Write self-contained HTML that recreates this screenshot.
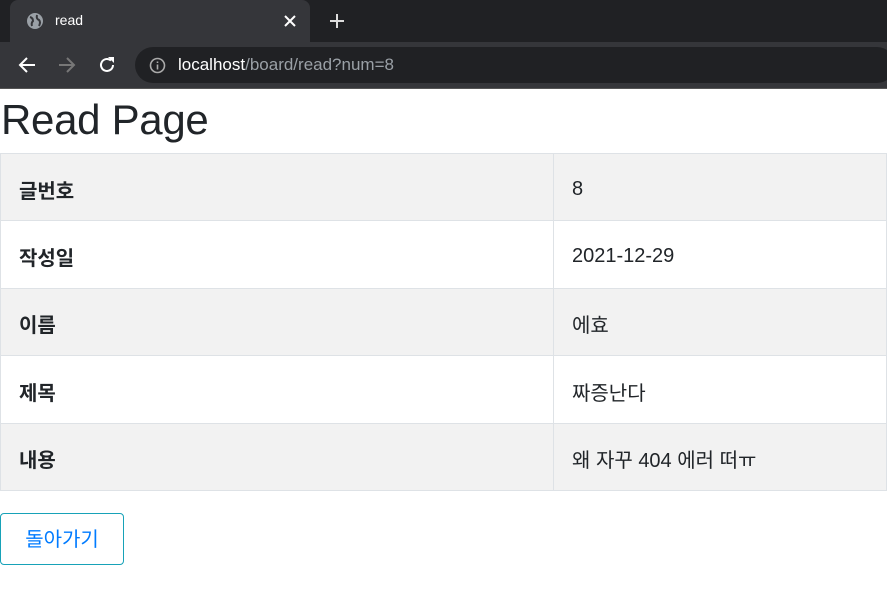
<!DOCTYPE html>
<html><head><meta charset="utf-8"><style>
*{margin:0;padding:0;box-sizing:border-box}
body{width:887px;height:593px;overflow:hidden;background:#fff;font-family:"Liberation Sans","Noto Sans CJK KR",sans-serif;color:#212529}
.tabbar{position:absolute;left:0;top:0;width:887px;height:42px;background:#202124}
.tab{position:absolute;left:10px;top:0;width:300px;height:42px;background:#35363a;border-radius:8px 8px 0 0}
.toolbar{position:absolute;left:0;top:42px;width:887px;height:46px;background:#35363a}
.url{position:absolute;left:135px;top:47px;width:760px;height:36px;background:#202124;border-radius:18px}
.line{position:absolute;left:0;top:88px;width:887px;height:1px;background:#555}
h1{position:absolute;left:1px;top:94px;font-size:42px;font-weight:normal;line-height:52px;color:#212529;letter-spacing:-0.3px}
table{position:absolute;left:0;top:153px;width:887px;border-collapse:collapse;font-size:20px}
td{border:1px solid #dee2e6;height:67.4px;padding:4px 18px 0}
tr:nth-child(odd) td{background:#f2f2f2}
td:first-child{width:553px;font-weight:bold}
.btn{position:absolute;left:0;top:513px;width:124px;height:52px;border:1px solid #17a2b8;border-radius:4px;color:#007bff;font-size:20px;line-height:52px;text-align:center}
</style></head><body>
<div class="tabbar"></div>
<div class="tab"></div>
<svg style="position:absolute;left:26px;top:12px" width="18" height="18" viewBox="0 0 18 18"><circle cx="9" cy="9" r="8" fill="#9aa0a6"/><path d="M4 5 Q7 6 7 9 Q5 11 6 14 M11 3 Q10 7 13 8 Q15 10 13 14" stroke="#35363a" stroke-width="2" fill="none"/></svg>
<div style="position:absolute;left:55px;top:12px;color:#fff;font-size:14px">read</div>
<svg style="position:absolute;left:284px;top:15px" width="12" height="12" viewBox="0 0 12 12"><path d="M1 1L11 11M11 1L1 11" stroke="#fff" stroke-width="2"/></svg>
<svg style="position:absolute;left:329px;top:13px" width="16" height="16" viewBox="0 0 16 16"><path d="M8 1V15M1 8H15" stroke="#ddd" stroke-width="2"/></svg>
<div class="toolbar"></div>
<div class="url"></div>
<svg style="position:absolute;left:18px;top:56px" width="18" height="18" viewBox="0 0 18 18"><path d="M17 9H2M9 2L2 9L9 16" stroke="#fff" stroke-width="2" fill="none"/></svg>
<svg style="position:absolute;left:58px;top:56px" width="18" height="18" viewBox="0 0 18 18"><path d="M1 9H16M9 2L16 9L9 16" stroke="#777" stroke-width="2" fill="none"/></svg>
<svg style="position:absolute;left:98px;top:56px" width="18" height="18" viewBox="0 0 18 18"><path d="M15 9A6 6 0 1 1 13 4.5" stroke="#fff" stroke-width="2" fill="none"/><path d="M10 1H16V7Z" fill="#fff"/></svg>
<svg style="position:absolute;left:149px;top:57px" width="17" height="17" viewBox="0 0 17 17"><circle cx="8.5" cy="8.5" r="7" stroke="#aaa" stroke-width="1.6" fill="none"/><path d="M8.5 7.5v5M8.5 4.5v1.5" stroke="#aaa" stroke-width="1.6"/></svg>
<div style="position:absolute;left:178px;top:55px;font-size:17px;color:#fff">localhost<span style="color:#9aa0a6">/board/read?num=8</span></div>
<div class="line"></div>
<h1>Read Page</h1>
<table>
<tr><td>글번호</td><td>8</td></tr>
<tr><td>작성일</td><td>2021-12-29</td></tr>
<tr><td>이름</td><td>에효</td></tr>
<tr><td>제목</td><td>짜증난다</td></tr>
<tr><td>내용</td><td>왜 자꾸 404 에러 떠ㅠ</td></tr>
</table>
<div class="btn">돌아가기</div>
</body></html>
